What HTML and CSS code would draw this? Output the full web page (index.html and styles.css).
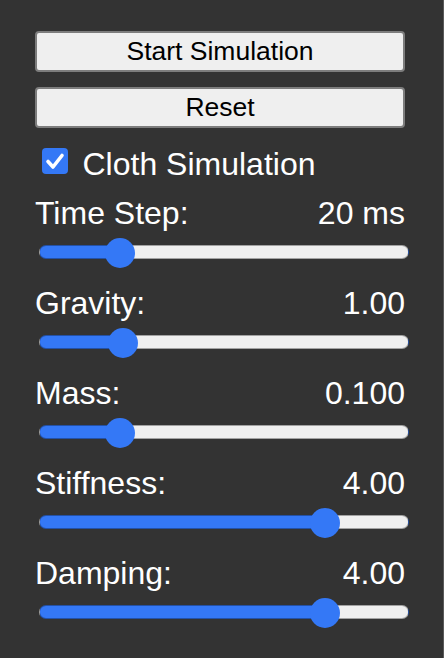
FILE: index.html
```html
<!DOCTYPE html>
<html lang="en">
<head>
<meta charset="utf-8">
<title>Cloth Simulation Controls</title>
<link rel="stylesheet" href="styles.css">
</head>
<body>
<div class="panel">
  <button class="btn" type="button">Start Simulation</button>
  <button class="btn btn-second" type="button">Reset</button>

  <label class="check-row">
    <span class="checkbox" role="checkbox" aria-checked="true">
      <svg viewBox="0 0 26 26" width="26" height="26" aria-hidden="true">
        <polyline points="6,13.5 11,19 20,7.5" fill="none" stroke="#ffffff" stroke-width="3.6" stroke-linecap="round" stroke-linejoin="round"/>
      </svg>
    </span>
    <span class="check-text">Cloth Simulation</span>
  </label>

  <div class="control">
    <div class="control-head"><span>Time Step:</span><span>20 ms</span></div>
    <input class="slider" type="range" min="1" max="100" value="20" style="--p: 0.1919">
  </div>
  <div class="control">
    <div class="control-head"><span>Gravity:</span><span>1.00</span></div>
    <input class="slider" type="range" min="0" max="5" step="0.01" value="1" style="--p: 0.2">
  </div>
  <div class="control">
    <div class="control-head"><span>Mass:</span><span>0.100</span></div>
    <input class="slider" type="range" min="0.005" max="0.5" step="0.001" value="0.1" style="--p: 0.1919">
  </div>
  <div class="control">
    <div class="control-head"><span>Stiffness:</span><span>4.00</span></div>
    <input class="slider" type="range" min="0" max="5" step="0.01" value="4" style="--p: 0.8">
  </div>
  <div class="control">
    <div class="control-head"><span>Damping:</span><span>4.00</span></div>
    <input class="slider" type="range" min="0" max="5" step="0.01" value="4" style="--p: 0.8">
  </div>
</div>
</body>
</html>
```

FILE: styles.css
```css
html, body {
  margin: 0;
  padding: 0;
  background: #333333;
}

body {
  font-family: "Liberation Sans", Arial, Helvetica, sans-serif;
  color: #ffffff;
}

.panel {
  box-sizing: border-box;
  width: 444px;
  height: 658px;
  padding: 31px 38px 0 35px;
  border-right: 1px solid #5a5a5a;
  display: flex;
  flex-direction: column;
}

.btn {
  display: block;
  box-sizing: border-box;
  width: 100%;
  height: 41px;
  margin: 0;
  padding: 0;
  font-family: inherit;
  font-size: 26.5px;
  color: #000000;
  background: #efefef;
  border: 2px solid #7d7d7d;
  border-radius: 4px;
}

.btn-second {
  margin-top: 15px;
}

.check-row {
  display: flex;
  align-items: flex-start;
  margin-top: 17.5px;
  height: 36px;
  line-height: 36px;
  font-size: 32px;
}

.checkbox {
  display: block;
  width: 26px;
  height: 26px;
  margin: 2.5px 0 0 7px;
  background: #3478f6;
  border-radius: 4px;
  flex: none;
}

.checkbox svg {
  display: block;
}

.check-text {
  margin-left: 14.5px;
}

.control {
  display: flex;
  flex-direction: column;
}

.check-row + .control {
  margin-top: 13px;
}

.control-head {
  display: flex;
  justify-content: space-between;
  height: 36px;
  line-height: 36px;
  font-size: 32px;
}

.slider {
  -webkit-appearance: none;
  appearance: none;
  display: block;
  box-sizing: border-box;
  width: 100%;
  height: 30px;
  margin: 6.5px 0 17.5px 4px;
  padding: 0;
  background: transparent;
}

.slider::-webkit-slider-runnable-track {
  height: 14px;
  border: 1px solid rgba(0, 0, 0, 0.32);
  border-radius: 8px;
  background: linear-gradient(to right,
    #3478f6 0,
    #3478f6 calc(15px + (100% - 30px) * var(--p)),
    #efefef calc(15px + (100% - 30px) * var(--p)),
    #efefef 100%);
}

.slider::-webkit-slider-thumb {
  -webkit-appearance: none;
  appearance: none;
  width: 30px;
  height: 30px;
  margin-top: -8px;
  border: none;
  border-radius: 50%;
  background: #3478f6;
}
```
